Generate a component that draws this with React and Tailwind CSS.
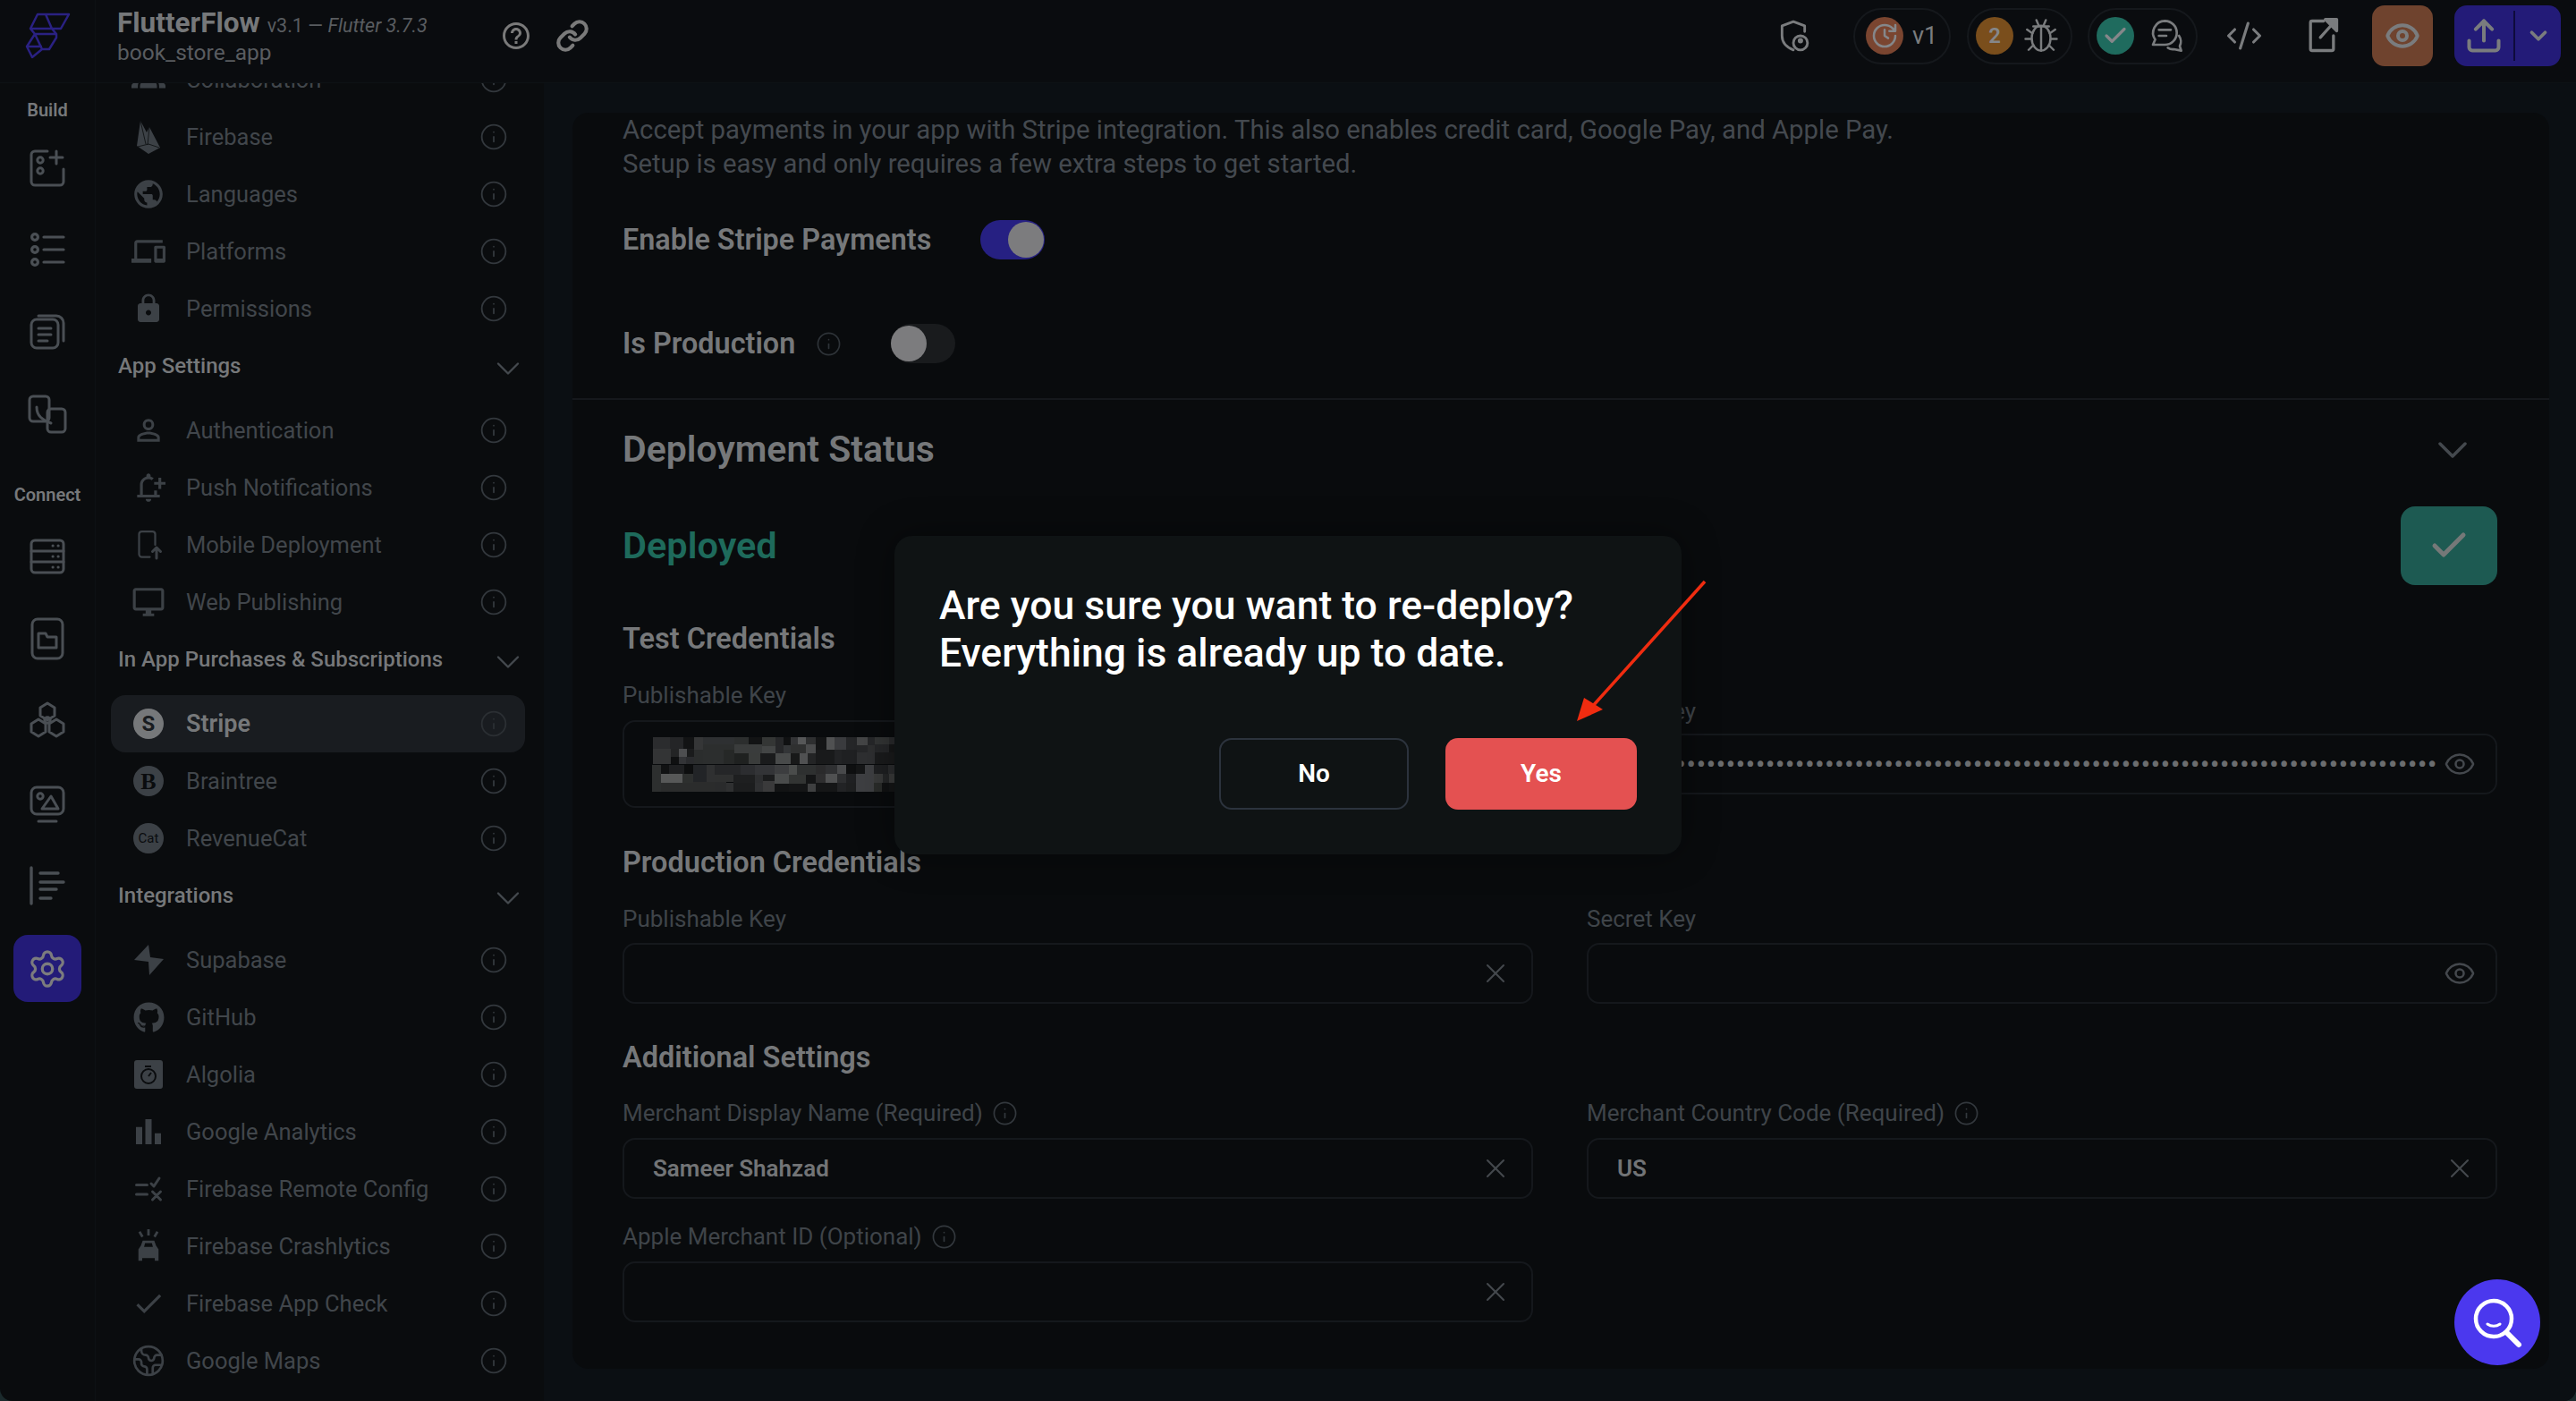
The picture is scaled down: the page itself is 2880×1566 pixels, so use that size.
import React from 'react';
import {
  Check, ChevronDown, CodeXml, Earth, Eye, Info, Link, Settings, Upload, X,
} from 'lucide-react';
import {
  MdBarChart, MdCheck, MdDevices, MdHelpOutline, MdLock, MdPersonOutline, MdPublic, MdOutlineNotificationAdd, MdOutlineDesktopWindows, MdGroups,
} from 'react-icons/md';
import { FaGithub } from 'react-icons/fa';

const Stroke = ({ size = 48, vb = 24, sw = 1.5, children }) => (
  <svg width={size} height={size} viewBox={`0 0 ${vb} ${vb}`} fill="none" stroke="currentColor" strokeWidth={sw} strokeLinecap="round" strokeLinejoin="round">
    {children}
  </svg>
);

const Letter = ({ children, serif }) => (
  <div className={`flex h-[34px] w-[34px] items-center justify-center rounded-full bg-[#3c4146] text-[#0a0c0e] ${serif ? "font-['Liberation_Serif',serif] text-[26px] font-bold" : 'text-[15px]'}`}>
    {children}
  </div>
);

const FirebaseFlame = () => (
  <svg width="26" height="37" viewBox="0 0 26 37" fill="currentColor">
    <path d="M0 28L4 0l7 13 3-6 12 23-13 7z" />
    <path d="M4 0l6 26M14 7l-2 20M1 29l12-3 12 4" fill="none" stroke="#0a0c0e" strokeWidth="0.8" />
  </svg>
);

const Bolt = () => (
  <svg width="33" height="34" viewBox="0 0 33 34" fill="currentColor">
    <path d="M16 0L0 17l16 2 1 15 16-18-15-2z" />
  </svg>
);

const MobileUp = () => (
  <Stroke size={36}>
    <path d="M13 21H7a2 2 0 0 1-2-2V4a2 2 0 0 1 2-2h8a2 2 0 0 1 2 2v8" />
    <path d="M18 22v-8M15 17l3-3 3 3" strokeWidth="2" />
  </Stroke>
);

const RemoteConfig = () => (
  <Stroke size={36} sw={2}>
    <path d="M3 9h8M3 16h8M14 8l2 2 4-6M15 14l6 6M21 14l-6 6" />
  </Stroke>
);

const Crash = () => (
  <svg width="34" height="38" viewBox="0 0 24 27" fill="currentColor">
    <path d="M6 13l1.400-4h9.200L18 13l2 3v9h-3v-2H7v2H4v-9z M8.500 14h7l-.8-3H9.300z" fillRule="evenodd" />
    <path d="M11 0h2v5h-2zM4 2.500l1.700-1 2.400 4-1.700 1zM20 2.500l-1.700-1-2.400 4 1.700 1z" />
  </svg>
);

const AlgoliaBox = () => (
  <div className="flex h-[32px] w-[32px] items-center justify-center rounded-[3px] bg-[#3c4146] text-[#0a0c0e]">
    <svg width="24" height="26" viewBox="0 0 24 26" fill="none" stroke="currentColor" strokeWidth="2">
      <circle cx="12" cy="15" r="8" />
      <path d="M12 15l3-4M8 4h7" />
    </svg>
  </div>
);

const general = [
  ['Collaboration', <MdGroups size={38} />],
  ['Firebase', <FirebaseFlame />],
  ['Languages', <MdPublic size={38} />],
  ['Platforms', <MdDevices size={38} />],
  ['Permissions', <MdLock size={36} />],
];

const sections = [
  {
    title: 'App Settings',
    items: [
      ['Authentication', <MdPersonOutline size={38} />],
      ['Push Notifications', <MdOutlineNotificationAdd size={38} />],
      ['Mobile Deployment', <MobileUp />],
      ['Web Publishing', <MdOutlineDesktopWindows size={38} />],
    ],
  },
  {
    title: 'In App Purchases & Subscriptions',
    items: [
      ['Stripe', <div className="flex h-[34px] w-[34px] items-center justify-center rounded-full bg-[#76787a] text-[24px] font-bold text-[#191c20]">S</div>, true],
      ['Braintree', <Letter serif>B</Letter>],
      ['RevenueCat', <Letter>Cat</Letter>],
    ],
  },
  {
    title: 'Integrations',
    items: [
      ['Supabase', <Bolt />],
      ['GitHub', <FaGithub size={35} />],
      ['Algolia', <AlgoliaBox />],
      ['Google Analytics', <MdBarChart size={42} />],
      ['Firebase Remote Config', <RemoteConfig />],
      ['Firebase Crashlytics', <Crash />],
      ['Firebase App Check', <MdCheck size={38} />],
      ['Google Maps', <Earth size={38} strokeWidth={1.7} />],
    ],
  },
];

const railBuild = [
  <Stroke>
    <path d="M12 3H5a2 2 0 0 0-2 2v15a2 2 0 0 0 2 2h14a2 2 0 0 0 2-2v-7" />
    <circle cx="8" cy="8" r="1.600" /><circle cx="8" cy="14" r="1.600" />
    <path d="M17 3v7M13.500 6.500h7" />
  </Stroke>,
  <Stroke sw={1.6}>
    <circle cx="5" cy="5" r="1.700" /><circle cx="5" cy="12" r="1.700" /><circle cx="5" cy="19" r="1.700" />
    <path d="M10 5h11M10 12h11M10 19h11" />
  </Stroke>,
  <Stroke>
    <rect x="3" y="5" width="15" height="16" rx="3" />
    <path d="M7 3h10a4 4 0 0 1 4 4v10M7 10h7M7 13.500h7M7 17h5" />
  </Stroke>,
  <Stroke>
    <rect x="2" y="2" width="11" height="14" rx="2" />
    <rect x="12" y="9" width="10" height="13" rx="2" />
    <path d="M6 8c0 5 3 7 8 9" />
  </Stroke>,
];

const railConnect = [
  <Stroke>
    <rect x="3" y="3" width="18" height="18" rx="2" />
    <path d="M3 9h18M3 15h18M15 6h.1M18 6h.1M15 12h.1M18 12h.1M15 18h.1M18 18h.1" />
  </Stroke>,
  <Stroke>
    <rect x="3.500" y="1" width="17" height="22" rx="3" />
    <path d="M7 9h4l1 2h5v6H7z" />
  </Stroke>,
  <Stroke>
    <path d="M12 2l4 2.500v4.500l-4 2.500-4-2.500V4.500zM7 11l4 2.500V18l-4 2.500L3 18v-4.500zM17 11l4 2.500V18l-4 2.500L13 18v-4.500z" />
    <circle cx="12" cy="11.500" r="1.600" />
  </Stroke>,
  <Stroke>
    <rect x="3" y="3" width="18" height="15" rx="3" />
    <circle cx="8" cy="8" r="1.600" />
    <path d="M9 15l5-7 4 7zM7 22h10" />
  </Stroke>,
  <Stroke sw={1.7}>
    <path d="M3 2v20M8 5h10M8 10h13M8 14h9M8 19h6" />
  </Stroke>,
];

const InfoDot = ({ size = 32, className = 'text-[#33383d]' }) => (
  <Info size={size} strokeWidth={1.4} className={className} />
);

const SidebarRow = ({ label, icon, active }) => (
  <div className={`flex h-[64px] items-center rounded-[16px] pl-[20px] pr-[19px] ${active ? 'bg-[#191c20]' : ''}`}>
    <div className={`flex w-[44px] justify-center ${active ? 'text-[#76787a]' : 'text-[#3c4146]'}`}>{icon}</div>
    <span className={`ml-[20px] flex-1 ${active ? 'text-[27px] font-semibold text-[#76787a]' : 'text-[25.500px] text-[#41464b]'}`}>{label}</span>
    <InfoDot className={active ? 'text-[#2b2f33]' : 'text-[#33383d]'} />
  </div>
);

const SectionHead = ({ title }) => (
  <div className="flex h-[72px] items-center pb-[8px] pl-[8px]">
    <span className="flex-1 text-[24px] font-medium text-[#76787a]">{title}</span>
    <ChevronDown size={44} strokeWidth={1.3} className="mr-[-3px] mt-[6px] text-[#44494e]" />
  </div>
);

const Toggle = ({ on }) => (
  <div className={`flex h-[44px] w-[72px] items-center rounded-full ${on ? 'justify-end bg-[#262082] pr-[1px]' : 'justify-start bg-[#191b1d]'}`}>
    <div className="h-[40px] w-[40px] rounded-full bg-[#7c7c7e]" />
  </div>
);

const Field = ({ value, icon = 'x' }) => (
  <div className="flex h-[68px] items-center rounded-[14px] border-2 border-[#15181c] pl-[32px] pr-[22px]">
    <span className="flex-1 text-[26px] font-semibold text-[#727476]">{value}</span>
    {icon === 'x'
      ? <X size={36} strokeWidth={1.4} className="text-[#44484d]" />
      : <Eye size={36} strokeWidth={1.7} className="text-[#44484d]" />}
  </div>
);

const Label = ({ children, info }) => (
  <div className="flex h-[32px] items-center gap-[10px] text-[26px] text-[#3f4449]">
    {children}
    {info && <InfoDot size={29} />}
  </div>
);

const Heading = ({ children, className }) => (
  <div className={`flex h-[36px] items-center text-[32.500px] font-semibold text-[#76787a] ${className}`}>{children}</div>
);

// pixelated secret in the test credentials field: x, y, w, h, fill
const mosaic = [
  [27,33,58,39,'#2b2c2e'],[85,33,45,39,'#242527'],[130,33,35,39,'#121314'],[165,33,30,42,'#353637'],[195,33,105,24,'#2e3032'],
  [300,33,48,24,'#2c2e2e'],[348,33,45,24,'#121314'],[393,33,45,30,'#343635'],[438,33,27,54,'#262729'],[465,33,24,27,'#101112'],
  [489,33,24,24,'#333436'],[513,33,27,24,'#565758'],[540,33,33,24,'#2e2f30'],[573,33,36,42,'#141516'],[609,33,27,42,'#505152'],
  [636,33,39,42,'#3a3b3e'],[675,33,36,42,'#252628'],[711,33,36,27,'#444546'],[747,33,24,27,'#262729'],[771,33,48,24,'#333535'],
  [819,33,27,24,'#2a2b2d'],[195,57,105,30,'#2c2e2e'],[300,57,93,30,'#3a3c3c'],[393,63,45,24,'#434545'],[465,60,24,27,'#333537'],
  [489,57,51,30,'#2f3030'],[540,57,33,30,'#4a4b4c'],[711,60,36,24,'#262729'],[747,60,24,24,'#2e2f30'],[771,57,48,27,'#262729'],
  [819,57,27,27,'#161718'],[27,72,60,50,'#333435'],[87,72,27,27,'#232425'],[114,72,27,27,'#4d4e50'],[141,72,24,27,'#1a1b1c'],
  [87,99,27,23,'#0f1011'],[114,99,24,23,'#333437'],[138,99,27,23,'#2a2b2e'],[165,75,30,47,'#2b2d2d'],[195,87,69,35,'#2c2e2e'],
  [264,75,36,47,'#262827'],[300,87,48,35,'#1f2120'],[348,87,39,35,'#3a3c3b'],[387,87,51,35,'#1a1b1c'],[438,87,51,35,'#484a4a'],
  [489,87,30,35,'#181919'],[519,87,27,35,'#505152'],[546,87,27,35,'#232425'],[573,75,63,47,'#191a1b'],[636,75,24,47,'#222325'],
  [660,75,51,47,'#1f2022'],[711,84,60,38,'#2e2f31'],[771,84,75,38,'#1a1b1c'],
  [24,125,30,91,'#2d2f2f'],[54,125,27,30,'#111213'],[81,125,51,30,'#1e1f21'],[132,125,30,30,'#0d0e0f'],[162,125,45,57,'#222427'],
  [207,125,27,57,'#2f3031'],[234,125,87,33,'#252628'],[321,125,48,33,'#2c2d30'],[369,125,66,33,'#333437'],[435,125,48,30,'#3c3d3f'],
  [483,125,27,33,'#4a4c4b'],[510,125,63,33,'#2e3030'],[573,125,33,30,'#2a2a2b'],[606,125,39,30,'#2f3032'],[645,125,30,30,'#48494b'],
  [675,125,33,30,'#0e0f10'],[708,125,30,30,'#151617'],[738,125,30,30,'#3e3f42'],[768,125,48,30,'#1f2022'],[816,125,30,30,'#2d2e30'],
  [54,155,72,31,'#575858'],[126,155,36,31,'#2d2f2e'],[162,182,72,4,'#2b2c2c'],[234,158,63,24,'#2f3030'],[297,158,72,27,'#1e1f20'],
  [369,158,27,27,'#2d2e30'],[396,158,39,22,'#1b1c1d'],[435,155,48,33,'#494b4b'],[483,158,57,30,'#323433'],[540,158,33,30,'#141516'],
  [573,155,33,30,'#2e2e2f'],[606,155,39,30,'#505152'],[645,155,30,30,'#2d2e30'],[675,155,33,30,'#1f2022'],[708,155,60,61,'#3e3f42'],
  [768,155,30,30,'#3a3b3b'],[798,155,21,30,'#262728'],[819,155,27,30,'#3c3d3d'],[54,186,180,30,'#2b2c2c'],[234,182,39,34,'#2a2b2c'],
  [273,185,24,31,'#2f3031'],[297,185,72,31,'#1c1d1e'],[369,185,27,31,'#2f3032'],[396,180,39,36,'#3a3a3b'],[435,188,48,28,'#121314'],
  [483,188,63,28,'#141516'],[546,188,27,28,'#3f4041'],[573,185,72,31,'#151617'],[645,185,30,31,'#222325'],[675,185,33,31,'#1e1f20'],
  [768,185,27,31,'#2a2c2a'],[795,185,24,31,'#111213'],[819,185,27,31,'#151617'],
];

const Pill = ({ className, children }) => (
  <div className={`flex h-[63px] items-center rounded-full border-2 border-[#15181c] ${className}`}>{children}</div>
);

const Disc = ({ bg, children }) => (
  <div className={`flex h-[42px] w-[42px] items-center justify-center rounded-full text-[24px] font-semibold text-[#85878a] ${bg}`}>{children}</div>
);

const App = () => {
  return (
    <div className="h-[1566px] w-[2880px] bg-[#1b2a2c]">
      <div className="relative flex h-full w-full flex-col overflow-hidden rounded-b-[14px] bg-[#0a0c0e] font-[Roboto,sans-serif]">
        {/* top bar */}
        <header className="z-10 flex h-[93px] shrink-0 items-start border-b border-[#0e1215] bg-[#0a0c0f]">
          <div className="flex h-full w-[107px] shrink-0 items-start border-r border-[#0e1114] pl-[20px] pt-[5px]">
            <svg width="70" height="70" viewBox="0 0 70 70" fill="none" stroke="#2a2182" strokeWidth="2.500" strokeLinejoin="round">
              <path d="M22 11H57L48 27H14ZM31 11L38 27M14 27L19 33H43L38 27M19 33L27 50H35L43 37V33M19 33L10 47L16 59L27 50ZM10 47H27" />
            </svg>
          </div>
          <div className="ml-[24px] w-[400px] pt-[2px]">
            <div className="flex h-[36px] items-baseline gap-[8px]">
              <span className="text-[31.500px] font-bold text-[#76787a]">FlutterFlow</span>
              <span className="text-[21.500px] text-[#595c60]">v3.1 — <i>Flutter 3.7.3</i></span>
            </div>
            <div className="mt-[3px] text-[24.500px] text-[#595c60]">book_store_app</div>
          </div>
          <div className="ml-[28px] flex h-[80px] items-center gap-[26px] text-[#7a7a7a]">
            <MdHelpOutline size={36} />
            <Link size={38} strokeWidth={2.600} />
          </div>
          <div className="ml-auto flex h-[80px] items-center pr-[17px] text-[#7a7c7e]">
            <Stroke size={38} sw={1.800}>
              <path d="M20 9V5l-8-3-8 3v7c0 5 3 8 8 10" />
              <circle cx="17" cy="17" r="5" />
              <circle cx="17" cy="15.500" r="1" />
            </Stroke>
            <Pill className="ml-[48px] w-[109px] pl-[12px]">
              <Disc bg="bg-[#7a4530]">
                <Stroke size={32} sw={1.900}>
                  <path d="M21 12a9 9 0 1 1-9-9c2.520 0 4.930 1 6.740 2.740L21 8M21 3v5h-5M12 7v5l3 2" />
                </Stroke>
              </Disc>
              <span className="ml-[10px] text-[27px]">v1</span>
            </Pill>
            <Pill className="ml-[18px] w-[118px] pl-[8px]">
              <Disc bg="bg-[#7a4e1c]">2</Disc>
              <div className="ml-[10px]">
                <Stroke size={42} sw={1.400}>
                  <ellipse cx="12" cy="13.500" rx="6" ry="8" />
                  <path d="M12 6v15.500M9 2l1.500 3.500M15 2l-1.500 3.500M3 8l3.500 2.500M21 8l-3.500 2.500M2 14h4M22 14h-4M4 21l3-3M20 21l-3-3M7 6h10" />
                </Stroke>
              </div>
            </Pill>
            <Pill className="ml-[17px] w-[123px] pl-[8px]">
              <Disc bg="bg-[#1f6b5e]"><Check size={30} strokeWidth={2.600} /></Disc>
              <div className="ml-[16px]">
                <Stroke size={40} sw={1.600}>
                  <path d="M11 2a8 8 0 0 1 8 8 8 8 0 0 1-8 8H3l1.500-3.500A8 8 0 0 1 11 2zM7 8h8M7 12h5M20.500 12c1.500 2 1.500 5 .5 7l1 3-5-1a6 6 0 0 1-4-1" />
                </Stroke>
              </div>
            </Pill>
            <div className="ml-[31px]"><CodeXml size={42} strokeWidth={1.800} /></div>
            <div className="ml-[44px]">
              <Stroke size={44} sw={1.800}>
                <path d="M13 3H6a1 1 0 0 0-1 1v16a1 1 0 0 0 1 1h12a1 1 0 0 0 1-1v-8M11 13l9-10" />
                <path d="M14 2h7v7z" fill="currentColor" />
              </Stroke>
            </div>
            <div className="ml-[34px] flex h-[68px] w-[68px] items-center justify-center rounded-[14px] bg-[#6f432e]">
              <Eye size={40} strokeWidth={2.400} />
            </div>
            <div className="ml-[24px] flex h-[68px] w-[119px] items-center rounded-[14px] bg-[#231b78]">
              <div className="flex h-[56px] w-[68px] items-center justify-center border-r-2 border-[#0e0b3c]">
                <Upload size={44} strokeWidth={2.200} />
              </div>
              <ChevronDown size={30} strokeWidth={3} className="ml-[11px]" />
            </div>
          </div>
        </header>

        <div className="flex min-h-0 flex-1">
          {/* icon rail */}
          <nav className="flex w-[107px] shrink-0 flex-col items-center border-r border-[#0e1114] pt-[12px] text-[#4a4f54]">
            <div className="h-[36px] text-[20px] font-semibold leading-[36px] text-[#76787a]">Build</div>
            {railBuild.map((icon, i) => (
              <div key={i} className="flex h-[92px] w-full shrink-0 items-center justify-center">{icon}</div>
            ))}
            <div className="mt-[26px] h-[36px] text-[20px] font-semibold leading-[36px] text-[#76787a]">Connect</div>
            <div className="h-[5px] shrink-0" />
            {railConnect.map((icon, i) => (
              <div key={i} className="flex h-[92px] w-full shrink-0 items-center justify-center">{icon}</div>
            ))}
            <div className="mt-[9px] flex h-[75px] w-[76px] shrink-0 items-center justify-center rounded-[16px] bg-[#231b78] text-[#7c7c7e]">
              <Settings size={46} strokeWidth={1.700} />
            </div>
          </nav>

          {/* settings list, scrolled a little */}
          <aside className="w-[501px] shrink-0 overflow-hidden pl-[17px] pr-[21px]">
            <div className="mt-[-36px]">
              {general.map(([label, icon]) => <SidebarRow key={label} label={label} icon={icon} />)}
              {sections.map(section => (
                <div key={section.title}>
                  <SectionHead title={section.title} />
                  {section.items.map(([label, icon, active]) => <SidebarRow key={label} label={label} icon={icon} active={active} />)}
                </div>
              ))}
            </div>
          </aside>

          {/* stripe settings */}
          <div className="min-w-0 flex-1 bg-[#0b0f13] pl-[32px] pr-[30px] pt-[33px] pb-[36px]">
            <main className="h-full overflow-hidden rounded-[18px] bg-[#090b0d] pl-[56px] pr-[58px]">
              <p className="text-[29.300px] leading-[38px] text-[#44494f]">
                Accept payments in your app with Stripe integration. This also enables credit card, Google Pay, and Apple Pay.<br />
                Setup is easy and only requires a few extra steps to get started.
              </p>
              <div className="mt-[44px] flex h-[44px] items-center gap-[55px]">
                <span className="text-[32.400px] font-semibold text-[#76787a]">Enable Stripe Payments</span>
                <Toggle on />
              </div>
              <div className="mt-[72px] flex h-[44px] items-center">
                <span className="text-[32.400px] font-semibold text-[#76787a]">Is Production</span>
                <InfoDot size={29} className="ml-[23px] text-[#2e3338]" />
                <div className="ml-[55px]"><Toggle /></div>
              </div>
              <div className="ml-[-56px] mr-[-58px] mt-[39px] border-t-2 border-[#15181c]" />
              <div className="mt-[33px] flex h-[46px] items-center justify-between">
                <span className="text-[41px] font-semibold text-[#76787a]">Deployment Status</span>
                <ChevronDown size={56} strokeWidth={1.500} className="mr-[22px] text-[#44494e]" />
              </div>
              <div className="mt-[40px] flex items-center justify-between">
                <span className="text-[41.500px] font-semibold text-[#1e6a5b]">Deployed</span>
                <div className="flex h-[88px] w-[108px] items-center justify-center rounded-[16px] bg-[#1d5a52]">
                  <Check size={48} strokeWidth={2.500} className="text-[#757878]" />
                </div>
              </div>
              <Heading className="mt-[42px]">Test Credentials</Heading>
              <div className="mt-[29px] grid grid-cols-2 items-start gap-x-[60px]">
                <div>
                  <Label>Publishable Key</Label>
                  <div className="mt-[12px] flex h-[98px] items-center rounded-[14px] border-2 border-[#15181c] pl-[31px]">
                    <svg width="274" height="61" viewBox="24 33 822 183" shapeRendering="crispEdges">
                      {mosaic.map(([x, y, w, h, fill]) => (
                        <rect key={`${x}-${y}`} x={x} y={y} width={w} height={h} fill={fill} />
                      ))}
                    </svg>
                  </div>
                </div>
                <div className="pt-[18px]">
                  <Label>Secret Key</Label>
                  <div className="mt-[9px] flex h-[68px] items-center rounded-[14px] border-2 border-[#15181c] pl-[32px] pr-[22px]">
                    <span className="flex-1 whitespace-nowrap text-[32px] leading-none tracking-[0.250px] text-[#6b6d6f]">{'•'.repeat(83)}</span>
                    <Eye size={36} strokeWidth={1.700} className="text-[#44484d]" />
                  </div>
                </div>
              </div>
              <Heading className="mt-[43px]">Production Credentials</Heading>
              <div className="mt-[29px] grid grid-cols-2 gap-x-[60px]">
                <div>
                  <Label>Publishable Key</Label>
                  <div className="mt-[11px]"><Field /></div>
                </div>
                <div>
                  <Label>Secret Key</Label>
                  <div className="mt-[11px]"><Field icon="eye" /></div>
                </div>
              </div>
              <Heading className="mt-[42px]">Additional Settings</Heading>
              <div className="mt-[28px] grid grid-cols-2 gap-x-[60px]">
                <div>
                  <Label info>Merchant Display Name (Required)</Label>
                  <div className="mt-[12px]"><Field value="Sameer Shahzad" /></div>
                  <div className="mt-[26px]"><Label info>Apple Merchant ID (Optional)</Label></div>
                  <div className="mt-[12px]"><Field /></div>
                </div>
                <div>
                  <Label info>Merchant Country Code (Required)</Label>
                  <div className="mt-[12px]"><Field value="US" /></div>
                </div>
              </div>
            </main>
          </div>
        </div>

        {/* confirm dialog */}
        <div className="absolute left-[1000px] top-[599px] z-20 flex h-[356px] w-[880px] flex-col rounded-[20px] bg-[#0f1314] pl-[50px] pr-[50px] pt-[52px] shadow-[0_0_40px_rgba(0,0,0,0.4)]">
          <div className="text-[44.500px] font-medium leading-[53px] text-white">
            Are you sure you want to re-deploy?<br />Everything is already up to date.
          </div>
          <div className="mt-[68px] flex justify-end gap-[41px]">
            <button className="flex h-[80px] w-[212px] items-center justify-center rounded-[14px] border-2 border-[#2c333d] text-[28px] font-semibold text-white">No</button>
            <button className="flex h-[80px] w-[214px] items-center justify-center rounded-[14px] bg-[#e45151] text-[28px] font-semibold text-white">Yes</button>
          </div>
        </div>

        {/* annotation arrow */}
        <svg className="absolute left-[1750px] top-[640px] z-30" width="170" height="180" viewBox="0 0 170 180">
          <path d="M156 10L30 150" stroke="#f02c10" strokeWidth="3.500" fill="none" />
          <path d="M13 166L21 140L42 153z" fill="#f02c10" />
        </svg>

        {/* floating search */}
        <div className="absolute left-[2744px] top-[1430px] z-30 flex h-[96px] w-[96px] items-center justify-center rounded-full bg-[#4b38ee]">
          <svg width="60" height="60" viewBox="0 0 60 60" fill="none" stroke="white" strokeLinecap="round">
            <circle cx="26" cy="26" r="20" strokeWidth="4.500" />
            <path d="M19 32c4 3 10 3 14 0" strokeWidth="3" />
            <path d="M41 42l13 13" strokeWidth="6" />
          </svg>
        </div>
      </div>
    </div>
  );
};

export default App;
